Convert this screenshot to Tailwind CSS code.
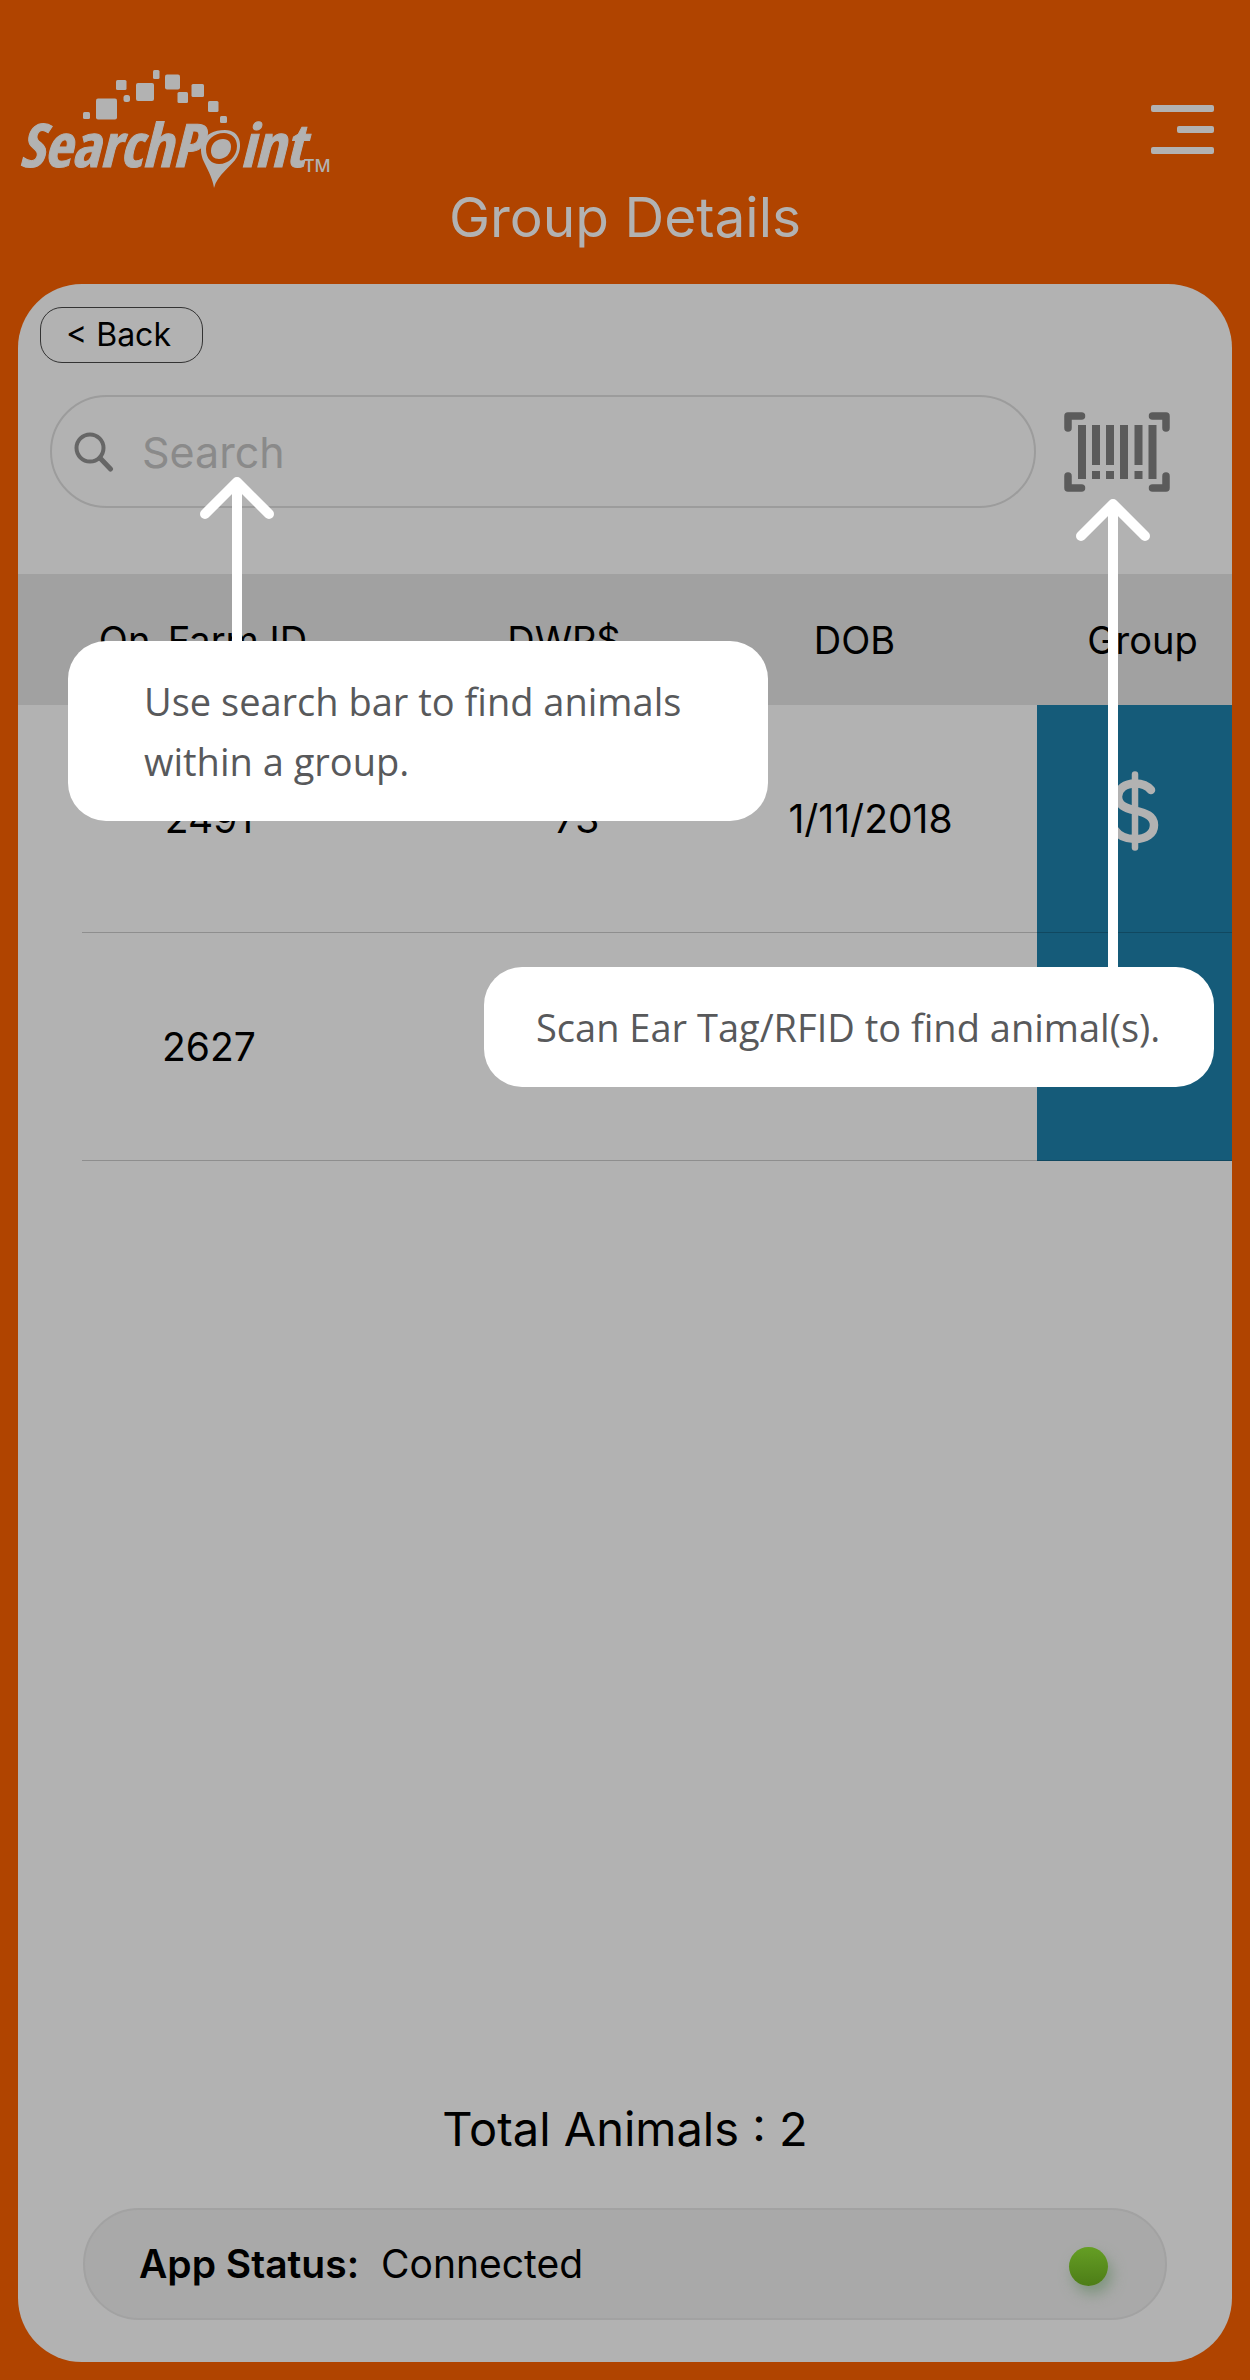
<!DOCTYPE html>
<html lang="en">
<head>
<meta charset="utf-8">
<meta name="viewport" content="width=device-width, initial-scale=1">
<title>SearchPoint - Group Details</title>
<script src="https://cdn.jsdelivr.net/npm/@tailwindcss/browser@4"></script>
</head>
<body class="flex min-h-screen flex-col bg-[#b04400] font-['Inter',sans-serif] text-black">

<header class="pt-[68px] pb-[35px]">
  <div class="flex h-[117px] items-start justify-between pr-9 pl-[18px]">
    <svg class="h-[122px] w-[320px] overflow-visible" viewBox="18 68 320 122" fill="#b2b2b2" role="img" aria-label="SearchPoint">
      <!-- pixel arc -->
      <rect x="83" y="112" width="7" height="7" rx="1.5"/>
      <rect x="96" y="98.500" width="21" height="21" rx="2"/>
      <rect x="116" y="80" width="10.500" height="10" rx="1.500"/>
      <rect x="123.500" y="95" width="6.500" height="7" rx="2.500"/>
      <rect x="136" y="83" width="18" height="18" rx="2"/>
      <rect x="153" y="70" width="6.500" height="9" rx="1.500"/>
      <rect x="165" y="74.500" width="15" height="15" rx="2"/>
      <rect x="177.500" y="92" width="10.500" height="11" rx="1.500"/>
      <rect x="191.500" y="84" width="12.500" height="13" rx="1.500"/>
      <rect x="208" y="101" width="10.500" height="11" rx="1.500"/>
      <rect x="220" y="116" width="7" height="7" rx="1.500"/>
      <g font-family="'Open Sans Condensed','Roboto Condensed','Open Sans',sans-serif" font-weight="700" font-style="italic" font-size="60" stroke="#b2b2b2" stroke-width="1">
        <text x="19" y="167">SearchP</text>
        <text x="240" y="167">int</text>
      </g>
      <!-- map pin -->
      <path fill-rule="evenodd" d="M214 188C213 180 209 172 204 162C197 147 202 130 225 130C241 130 243 147 237 157C232 166 217 175 214 188ZM206 149C206 159 212 164 219 164C229 164 237 156 237 146C237 138 231 133 224 133C214 133 206 140 206 149Z"/>
      <path d="M211 151C211 143 217 139 223 139C229 139 231 143 231 147C231 154 225 159 219 159C214 159 211 156 211 151Z"/>
      <text x="304" y="172" font-family="'Open Sans',sans-serif" font-weight="600" font-size="18">TM</text>
    </svg>
    <button type="button" aria-label="Menu" class="mt-[37px] flex w-[63px] flex-col items-end gap-[14px]">
      <span class="h-[7px] w-full rounded-xs bg-[#b2b2b2]"></span>
      <span class="h-[7px] w-[37px] rounded-xs bg-[#b2b2b2]"></span>
      <span class="h-[7px] w-full rounded-xs bg-[#b2b2b2]"></span>
    </button>
  </div>
  <h1 class="text-center text-[55px] leading-[64px] font-normal text-[#b2b2b2]">Group Details</h1>
</header>

<main class="relative mx-[18px] mb-[18px] flex flex-1 flex-col rounded-[64px] bg-[#b2b2b2]">
  <button type="button" class="mt-[23px] ml-[22px] h-14 w-[163px] self-start rounded-[22px] border border-[#333] pr-1.5 text-[32px] leading-10">&lt; Back</button>

  <form class="mt-8 flex items-center gap-7 pr-[62px] pl-8">
    <label class="flex h-[113px] flex-1 items-center gap-7 rounded-full border-2 border-[#9c9c9c] pl-[22px]">
      <svg class="size-10 shrink-0" viewBox="0 0 40 40" fill="none" stroke="#666" aria-hidden="true"><circle cx="16" cy="16" r="13.500" stroke-width="4"/><path d="M26 26L36.500 37" stroke-width="5" stroke-linecap="round"/></svg>
      <input type="search" aria-label="Search" placeholder="Search" class="w-full min-w-0 bg-transparent text-[43px] leading-[56px] outline-none placeholder:text-[#8a8a8a]">
    </label>
    <button type="button" aria-label="Scan ear tag">
      <svg class="h-20 w-[106px]" viewBox="0 0 106 80" aria-hidden="true">
        <path d="M17.500 4H4V16M88.500 4H102V16M4 64V76H17.500M102 64V76H88.500" fill="none" stroke="#5b5b5b" stroke-width="7.500" stroke-linecap="round" stroke-linejoin="round"/>
        <path d="M14 13h8v54h-8zM28 13h8v40h-8zM28 59h8v8h-8zM42 13h8v40h-8zM42 59h8v8h-8zM56 13h8v54h-8zM70.500 13h8v40h-8zM70.500 59h8v8h-8zM84.500 13h8v54h-8z" fill="#5b5b5b"/>
      </svg>
    </button>
  </form>

  <table class="mt-[66px] w-full table-fixed border-separate border-spacing-0 text-center text-[38px] leading-[48px]">
    <colgroup><col><col class="w-[336px]"><col class="w-[301px]"><col class="w-[195px]"></colgroup>
    <thead class="bg-[#a1a1a1]">
      <tr class="h-[131px]">
        <th class="pr-3 font-normal">On-Farm ID</th>
        <th class="pr-2 font-normal">DWP$</th>
        <th class="pr-16 font-normal">DOB</th>
        <th class="pl-4 font-normal">Group</th>
      </tr>
    </thead>
    <tbody class="text-[39px]">
      <tr class="h-[228px]">
        <td class="relative after:absolute after:right-0 after:bottom-0 after:left-16 after:h-px after:bg-black/20">2491</td>
        <td class="border-b border-black/20">-73</td>
        <td class="border-b border-black/20 pr-8">1/11/2018</td>
        <td class="border-b border-black/20 bg-[#155b79]">
          <svg class="mx-auto mb-4 h-20 w-12" viewBox="0 0 48 80" fill="none" stroke="#b2b2b2" stroke-linecap="round" role="img" aria-label="Dollar group"><path d="M24 3.500V76.500" stroke-width="6.500"/><path d="M40 19C36 14 31 12.500 24 12.500C14 12.500 7 18 7 25.500C7 34 14 37 24 39.500C35 42 43 45 43 54C43 63 35 68 24 68C15 68 8 65 4 59" stroke-width="8.500"/></svg>
        </td>
      </tr>
      <tr class="h-[228px]">
        <td class="relative after:absolute after:right-0 after:bottom-0 after:left-16 after:h-px after:bg-black/20">2627</td>
        <td class="border-b border-black/20"></td>
        <td class="border-b border-black/20"></td>
        <td class="border-b border-black/20 bg-[#155b79]"></td>
      </tr>
    </tbody>
  </table>

  <p class="mt-auto mb-[51px] text-center text-[47px] leading-[56px]">Total Animals : 2</p>

  <div class="mx-[65px] mb-[42px] flex h-28 items-center rounded-full border-2 border-[#a2a2a2] bg-[#a9a9a9] pr-[57px] pl-[54px] text-[39px] leading-[48px]">
    <strong class="font-semibold">App Status:</strong>
    <span class="ml-[22px]">Connected</span>
    <span class="mt-1 ml-auto size-[39px] rounded-full bg-linear-to-b from-[#659e24] to-[#4d7d17] shadow-[4px_8px_14px_#7f957f]"></span>
  </div>

  <!-- coach marks -->
  <div class="absolute top-[357px] left-[50px] w-[700px] rounded-[38px] bg-white py-[30px] pr-16 pl-[76px] font-['Open_Sans',sans-serif] text-[38px] leading-[60px] text-[#58595b]" role="tooltip">
    <svg class="absolute bottom-full left-[132px] h-[164px] w-[74px]" viewBox="0 0 74 164" fill="none" stroke="#fff" stroke-width="10" stroke-linecap="round" stroke-linejoin="round" aria-hidden="true"><path d="M5 37L37 5L69 37"/><path d="M37 7V164" stroke-linecap="butt"/></svg>
    Use search bar to find animals<br>within a group.
  </div>
  <div class="absolute top-[683px] right-[18px] w-[730px] rounded-[38px] bg-white py-[30px] pl-[52px] font-['Open_Sans',sans-serif] text-[38px] leading-[60px] whitespace-nowrap text-[#58595b]" role="tooltip">
    <svg class="absolute right-16 bottom-full h-[468px] w-[74px]" viewBox="0 0 74 468" fill="none" stroke="#fff" stroke-width="10" stroke-linecap="round" stroke-linejoin="round" aria-hidden="true"><path d="M5 37L37 5L69 37"/><path d="M37 7V468" stroke-linecap="butt"/></svg>
    Scan Ear Tag/RFID to find animal(s).
  </div>
</main>
</body>
</html>
